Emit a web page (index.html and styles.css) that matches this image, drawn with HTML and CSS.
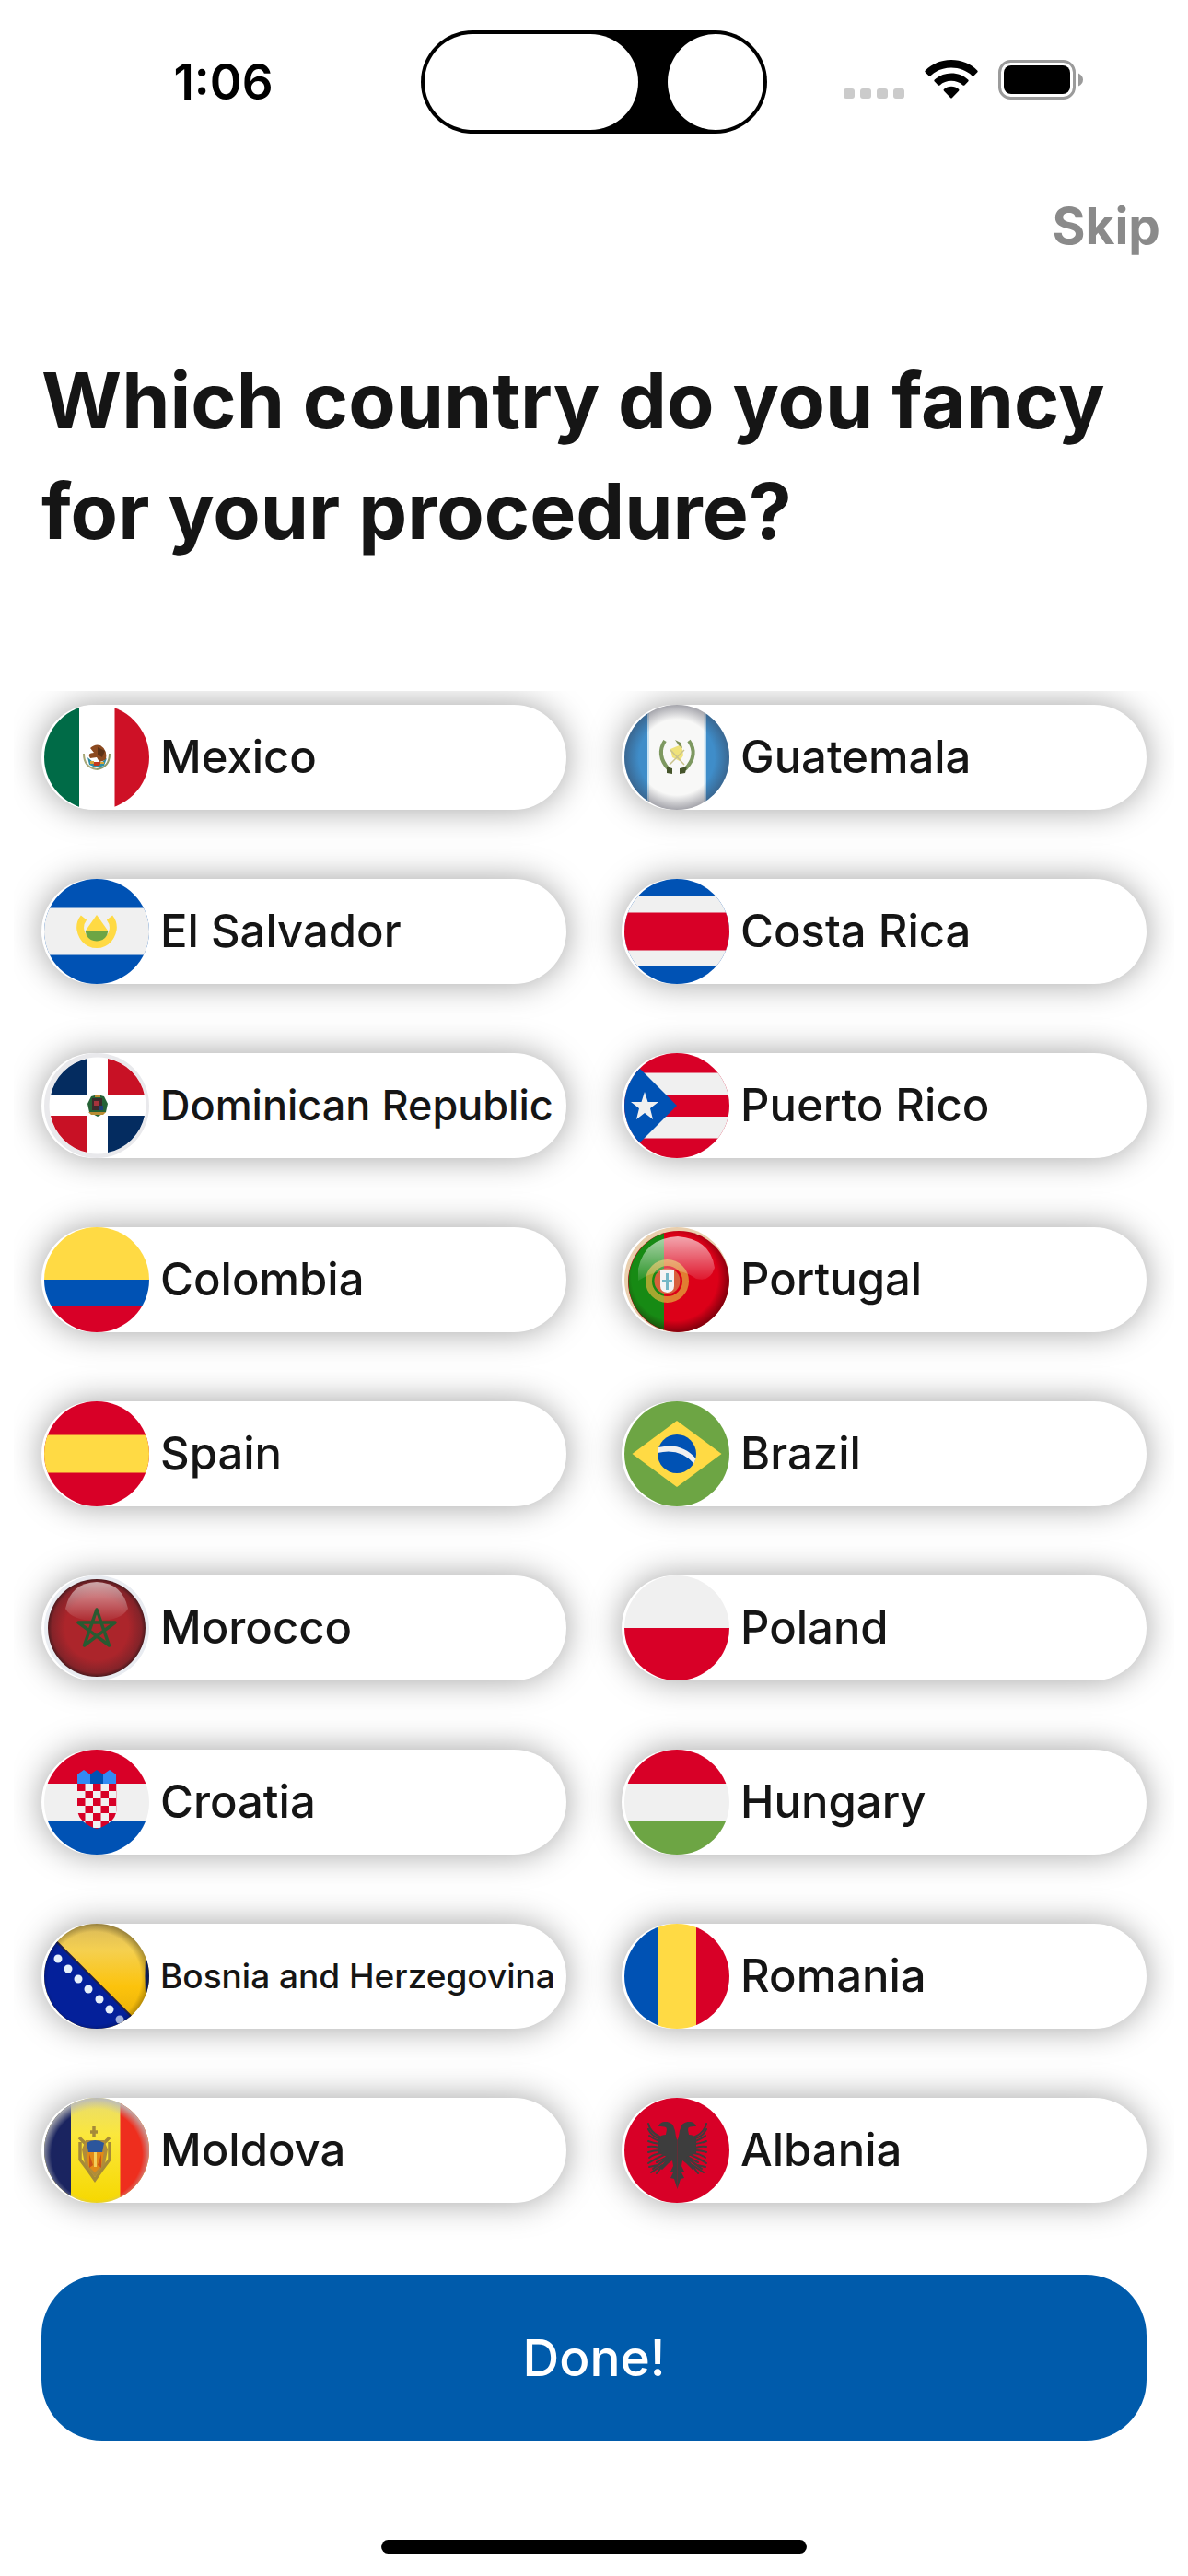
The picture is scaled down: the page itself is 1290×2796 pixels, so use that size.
FILE: index.html
```html
<!DOCTYPE html>
<html lang="en">
<head>
<meta charset="utf-8">
<meta name="viewport" content="width=device-width, initial-scale=1">
<title>Choose a country</title>
<link rel="stylesheet" href="styles.css">
</head>
<body class="screen">
<header class="status">
  <time class="status-time">1:06</time>
  <div class="island"><span class="island-pill"></span><span class="island-lens"></span></div>
  <div class="status-icons">
    <svg class="icon-signal" width="66" height="44" viewBox="0 0 66 44" aria-hidden="true"><g fill="#cbcbcb"><rect x="0" y="31" width="12" height="11" rx="3"/><rect x="18" y="31" width="12" height="11" rx="3"/><rect x="36" y="31" width="12" height="11" rx="3"/><rect x="54" y="31" width="12" height="11" rx="3"/></g></svg>
    <svg class="icon-wifi" width="58" height="44" viewBox="0 0 58 44" aria-hidden="true"><path d="M29 0C40 0 50 4 57.200 11.500Q58.200 12.500 57.200 13.500L53.500 17.200Q52.500 18 51.500 17.200C45.500 11.600 37.500 8.600 29 8.600S12.500 11.600 6.500 17.200Q5.500 18 4.500 17.200L.8 13.500Q-.2 12.500.8 11.500C8 4 18 0 29 0Z"/><path d="M29 14.500C36 14.500 42.500 17 47.200 21.600Q48.200 22.600 47.200 23.600L43.400 27.400Q42.500 28.200 41.500 27.400C38 24.400 33.700 22.800 29 22.800S20 24.400 16.500 27.400Q15.500 28.200 14.600 27.400L10.800 23.600Q9.800 22.600 10.800 21.600C15.500 17 22 14.500 29 14.500Z"/><path d="M29 28.800C32 28.800 34.800 29.900 37 31.700Q38 32.700 37 33.700L30 41Q29 42 28 41L21 33.700Q20 32.700 21 31.700C23.200 29.900 26 28.800 29 28.800Z"/></svg>
    <svg class="icon-battery" width="93" height="44" viewBox="0 0 93 44" aria-hidden="true"><rect x="1.500" y="1.500" width="81" height="40" rx="12" fill="none" stroke="#9b9b9b" stroke-width="3"/><rect x="6" y="6" width="72" height="31" rx="8"/><path d="M87 14.500Q92 17 92 21.500T87 28.500Z" fill="#9b9b9b"/></svg>
  </div>
</header>

<nav class="topbar"><button type="button" class="skip">Skip</button></nav>

<main class="content">
  <h1 class="title">Which country do you fancy for your procedure?</h1>

  <div class="countries">
    <button type="button" class="country">
      <svg class="flag" viewBox="0 0 114 114" aria-hidden="true"><path fill="#fff" d="M0 0h114v114H0z"/><path fill="#006b47" d="M0 0h38v114H0z"/><path fill="#ce1126" d="M76.500 0H114v114H76.500z"/><g fill="none" stroke-width="2"><path stroke="#a8a878" d="M43 53Q43 68 57 70"/><path stroke="#8e9a6a" d="M71 53Q71 68 57 70"/></g><path fill="#8c4a20" d="M50 47Q55 42 61 44 69 49 67 60L60 62 57 57 50 58Q46 52 54 52Z"/><path fill="#5d3216" d="M58 46L66 50 63 57 58 54Z"/><path fill="#2f8ea3" d="M47 57L53 62H63L68 58 65 66Q57 70 49 65Z"/><path fill="#c33a1e" d="M53 62h9l-2 4h-6z"/><path fill="#d5a63a" d="M50 61h4v3h-4zM61 62h4v2h-4z"/></svg>
      <span class="name">Mexico</span>
    </button>
    <button type="button" class="country">
      <svg class="flag" viewBox="0 0 114 114" aria-hidden="true"><defs><radialGradient id="gt-shade" cx=".5" cy=".5" r=".5"><stop offset=".72" stop-color="#334" stop-opacity="0"/><stop offset="1" stop-color="#334" stop-opacity=".42"/></radialGradient></defs><path fill="#f8f8f7" d="M0 0h114v114H0z"/><path fill="#3f8dc9" d="M0 0h25v114H0zM88.500 0H114v114H88.500z"/><path fill="#c9e4f4" d="M25 0h2v114h-2zM86.500 0h2v114h-2z"/><path fill="url(#gt-shade)" d="M0 0h114v114H0z"/><g fill="none" stroke="#7d9860" stroke-width="4"><path d="M44 39Q34 54 48 70"/><path d="M70 39Q81 54 66 70"/></g><path fill="#46552c" d="M46 67l6 2v6l-6-1zM60 69l8-2-2 7-6 1z"/><path fill="#efe27a" d="M50 48l12-5 2 12-4 6-8-4z"/><path fill="#7c8f58" d="M55 38l6 3 2 6-4-3z"/><path stroke="#c9c38c" stroke-width="1.500" d="M49 65l16-16M50 49l15 16"/></svg>
      <span class="name">Guatemala</span>
    </button>
    <button type="button" class="country">
      <svg class="flag" viewBox="0 0 114 114" aria-hidden="true"><path fill="#0052b4" d="M0 0h114v114H0z"/><path fill="#f0f0f0" d="M0 31.500h114v51H0z"/><path fill="none" stroke="#ffda44" stroke-width="8" d="M43 42C36 51 40 60 44 65 51 73 63 73 70 65 74 60 78 51 71 42"/><path fill="#ffda44" d="M57 39L69 56H45Z"/><path fill="#6da544" d="M44.500 56h25Q68 67 57 67.500 46 67 44.500 56Z"/></svg>
      <span class="name">El Salvador</span>
    </button>
    <button type="button" class="country">
      <svg class="flag" viewBox="0 0 114 114" aria-hidden="true"><path fill="#0052b4" d="M0 0h114v114H0z"/><path fill="#f0f0f0" d="M0 19h114v76H0z"/><path fill="#d80027" d="M0 36.500h114v41H0z"/></svg>
      <span class="name">Costa Rica</span>
    </button>
    <button type="button" class="country">
      <svg class="flag" viewBox="0 0 114 114" aria-hidden="true"><path fill="#e9e9ec" d="M0 0h114v114H0z"/><circle cx="58" cy="57" r="52.500" fill="#fff"/><path fill="#042c60" d="M47 6A52 52 0 0 0 7 46H47ZM69 108A52 52 0 0 0 109 68H69Z"/><path fill="#c81125" d="M69 6A52 52 0 0 1 109 46H69ZM47 108A52 52 0 0 1 7 68H47Z"/><path fill="#256236" d="M47 55L51 47 58 45 65 47 69 55 67 64 58 69 49 64Z"/><path fill="#3a2b2b" d="M52 49h11v13H52z"/><path fill="#b98c32" d="M55 45h6v3h-6zM48 64h19l-3 3H51z"/><path fill="#a5333c" d="M54 52h5v5h-5z"/><path fill="#1f3f78" d="M59 57h5v5h-5z"/></svg>
      <span class="name name-long">Dominican Republic</span>
    </button>
    <button type="button" class="country">
      <svg class="flag" viewBox="0 0 114 114" aria-hidden="true"><path fill="#d80027" d="M0 0h114v114H0z"/><path fill="#f0f0f0" d="M0 21.500h114v23.500H0zM0 69h114v23.500H0z"/><path fill="#0052b4" d="M0 0L57 57 0 114Z"/><path fill="#f0f0f0" d="M22 42L25.500 53H37L28 60 31 72 22 65 13 72 16 60 7 53H18.500Z"/></svg>
      <span class="name">Puerto Rico</span>
    </button>
    <button type="button" class="country">
      <svg class="flag" viewBox="0 0 114 114" aria-hidden="true"><path fill="#ffda44" d="M0 0h114v57H0z"/><path fill="#0052b4" d="M0 57h114v29H0z"/><path fill="#d80027" d="M0 86h114v28H0z"/></svg>
      <span class="name">Colombia</span>
    </button>
    <button type="button" class="country">
      <svg class="flag" viewBox="0 0 114 114" aria-hidden="true"><defs><radialGradient id="pt-shade" cx=".46" cy=".46" r=".56"><stop offset=".76" stop-color="#200" stop-opacity="0"/><stop offset="1" stop-color="#200" stop-opacity=".55"/></radialGradient><linearGradient id="pt-gloss" x2="0" y2="1"><stop stop-color="#fff" stop-opacity=".65"/><stop offset="1" stop-color="#fff" stop-opacity=".08"/></linearGradient></defs><path fill="#e9cfae" d="M0 0h114v114H0z"/><circle cx="59" cy="59" r="55" fill="#dc0018"/><path fill="#178a14" d="M43 6.500A55 55 0 0 0 43 111.500Z"/><circle cx="59" cy="59" r="55" fill="url(#pt-shade)"/><circle cx="46.500" cy="58.500" r="20" fill="none" stroke="#e3b43c" stroke-width="7" opacity=".7"/><circle cx="46.500" cy="58.500" r="14" fill="#d8603c"/><path fill="#f4f4f4" d="M39 47h15v17q0 6-7.500 7-7.500-1-7.500-7z"/><path fill="#74b7c6" d="M45 50h3v18h-3zM41 57h11v3H41z"/><path fill="url(#pt-gloss)" d="M15 45Q22 12 58 10 94 13 98 44 93 60 78 56 50 36 15 58Z"/></svg>
      <span class="name">Portugal</span>
    </button>
    <button type="button" class="country">
      <svg class="flag" viewBox="0 0 114 114" aria-hidden="true"><path fill="#d80027" d="M0 0h114v114H0z"/><path fill="#ffda44" d="M0 36.500h114v41H0z"/></svg>
      <span class="name">Spain</span>
    </button>
    <button type="button" class="country">
      <svg class="flag" viewBox="0 0 114 114" aria-hidden="true"><path fill="#6da544" d="M0 0h114v114H0z"/><path fill="#ffda44" d="M57 21L105.500 57 57 93 8.500 57Z"/><circle cx="57" cy="57" r="21" fill="#0052b4"/><path fill="#f0f0f0" d="M37 50Q62 44 77.500 62L75.500 67.500Q60 50 36 56Z"/></svg>
      <span class="name">Brazil</span>
    </button>
    <button type="button" class="country">
      <svg class="flag" viewBox="0 0 114 114" aria-hidden="true"><defs><radialGradient id="ma-shade" cx=".5" cy=".5" r=".5"><stop offset=".65" stop-color="#ac252b"/><stop offset=".92" stop-color="#832329"/><stop offset="1" stop-color="#4d1a1e"/></radialGradient><linearGradient id="ma-gloss" x2="0" y2="1"><stop stop-color="#fff" stop-opacity=".6"/><stop offset="1" stop-color="#fff" stop-opacity=".03"/></linearGradient></defs><path fill="#e9ecf1" d="M0 0h114v114H0z"/><circle cx="57" cy="57" r="53" fill="url(#ma-shade)"/><path fill="url(#ma-gloss)" d="M23 36Q29 8 57 7 85 8 91 36 84 49 57 49 30 49 23 36Z"/><path fill="none" stroke="#285a31" stroke-width="3.500" stroke-linejoin="round" d="M57 37L70.500 76 37 51H77L43.500 76Z"/></svg>
      <span class="name">Morocco</span>
    </button>
    <button type="button" class="country">
      <svg class="flag" viewBox="0 0 114 114" aria-hidden="true"><path fill="#f0f0f0" d="M0 0h114v57H0z"/><path fill="#d80027" d="M0 57h114v57H0z"/></svg>
      <span class="name">Poland</span>
    </button>
    <button type="button" class="country">
      <svg class="flag" viewBox="0 0 114 114" aria-hidden="true"><defs><pattern id="hr-check" x="36" y="37" width="17" height="16" patternUnits="userSpaceOnUse"><path fill="#f0f0f0" d="M0 0h17v16H0z"/><path fill="#d80027" d="M0 0h8.500v8H0zM8.500 8H17v8H8.500z"/></pattern></defs><path fill="#f0f0f0" d="M0 0h114v114H0z"/><path fill="#d80027" d="M0 0h114v37H0z"/><path fill="#0052b4" d="M0 77h114v37H0z"/><path fill="#338af3" d="M36 37V27l7-5 7 5 7-3 7 3 7-5 7 5v10Z"/><path fill="#0052b4" d="M50 37V27l7-5 7 5v10Z"/><path fill="url(#hr-check)" d="M36 37H78.500V66Q77 80 57 86 38 80 36 66Z"/></svg>
      <span class="name">Croatia</span>
    </button>
    <button type="button" class="country">
      <svg class="flag" viewBox="0 0 114 114" aria-hidden="true"><path fill="#f0f0f0" d="M0 0h114v114H0z"/><path fill="#d80027" d="M0 0h114v37H0z"/><path fill="#6da544" d="M0 78h114v36H0z"/></svg>
      <span class="name">Hungary</span>
    </button>
    <button type="button" class="country">
      <svg class="flag" viewBox="0 0 114 114" aria-hidden="true"><defs><linearGradient id="ba-gold" x2="0" y2="1"><stop stop-color="#d9b95a"/><stop offset=".25" stop-color="#f5d050"/><stop offset=".6" stop-color="#fcc30c"/><stop offset="1" stop-color="#e5ac08"/></linearGradient><radialGradient id="ba-shade" cx=".48" cy=".52" r=".54"><stop offset=".82" stop-opacity="0"/><stop offset="1" stop-opacity=".38"/></radialGradient></defs><path fill="url(#ba-gold)" d="M0 0h114v114H0z"/><path fill="#04209a" d="M0 6L108 114H0Z"/><path stroke="#20204a" stroke-width="2" d="M0 6L108 114"/><path fill="url(#ba-shade)" d="M0 0h114v114H0z"/><path fill="#0b1c55" d="M111 26Q108 57 111 88H114V26Z"/><g fill="#e6f0fb"><circle cx="15" cy="38" r="4.500"/><circle cx="26" cy="49" r="4.500"/><circle cx="37" cy="60" r="4.500"/><circle cx="48" cy="71" r="4.500"/><circle cx="60" cy="82" r="4.500"/><circle cx="71" cy="93" r="4.500"/><circle cx="82" cy="104" r="4.500" opacity=".7"/></g></svg>
      <span class="name name-longest">Bosnia and Herzegovina</span>
    </button>
    <button type="button" class="country">
      <svg class="flag" viewBox="0 0 114 114" aria-hidden="true"><path fill="#0052b4" d="M0 0h37v114H0z"/><path fill="#ffda44" d="M37 0h41v114H37z"/><path fill="#d80027" d="M78 0h36v114H78z"/></svg>
      <span class="name">Romania</span>
    </button>
    <button type="button" class="country">
      <svg class="flag" viewBox="0 0 114 114" aria-hidden="true"><defs><radialGradient id="md-shade" cx=".5" cy=".54" r=".54"><stop offset=".8" stop-color="#bbb" stop-opacity="0"/><stop offset="1" stop-color="#bbb"/></radialGradient><linearGradient id="md-gold" x2="0" y2="1"><stop stop-color="#e8dc70"/><stop offset=".35" stop-color="#fbe73c"/><stop offset="1" stop-color="#f6d800"/></linearGradient></defs><path fill="url(#md-gold)" d="M0 0h114v114H0z"/><path fill="#1a2460" d="M0 0h29v114H0z"/><path fill="#ee2e1e" d="M82.500 0H114v114H82.500z"/><path fill="url(#md-shade)" d="M0 0h114v114H0z"/><path fill="none" stroke="#a58a38" stroke-width="3.500" d="M54 31v12M50 37h8M38 43l9 9M71 43l-9 9M39 48v19l9 12 7 10 7-10 9-12V48"/><path fill="#b08c3a" d="M45 46h20l4 10-3 16-11 14-11-14-3-16Z"/><path fill="#2c569c" d="M46 49Q55 43 65 49L63 59H48Z"/><path fill="#e18a16" d="M46 59h19l-3 15-7 7-7-7Z"/><path fill="#c95318" d="M49 61l4 12-4 3zM62 61l-4 12 4 3z"/><path fill="#f3cf5a" d="M54 59h3v16h-3z"/></svg>
      <span class="name">Moldova</span>
    </button>
    <button type="button" class="country">
      <svg class="flag" viewBox="0 0 114 114" aria-hidden="true"><path fill="#d80027" d="M0 0h114v114H0z"/><g id="al-half" fill="#3d3d3d"><path d="M57.500 46C55 41 56 37 54 33 53 28 49 26 45 26 40 26 38 28 37 31 40 31 43 31 45 32 47 34 45 38 45 40 42 40 39 41 37 43V60L44 63 47 65 41 73 38 76 41 78 48 71 52 68 53 74 50 80 53 81 50 87 54 88 57.500 99Z"/><g fill="none" stroke="#3d3d3d" stroke-width="2" stroke-linecap="round"><path d="M26 28Q28 37 38 42M26 34Q30 42 38 44M27 41Q32 45 38 47M26 47Q31 49 38 50M26 53Q31 52 38 54M26 59Q32 57 39 57M27 65Q32 61 40 60M26 71Q33 66 43 62M35 70Q41 67 46 64M47 65L36 73 27 75M44 68L31 77M41 73L29 81M41 74L35 82"/></g></g><use href="#al-half" transform="matrix(-1 0 0 1 115 0)"/></svg>
      <span class="name">Albania</span>
    </button>
  </div>

  <button type="button" class="done">Done!</button>
</main>

<footer class="home"><span class="home-bar"></span></footer>
</body>
</html>
```

FILE: styles.css
```css
* {
  box-sizing: border-box;
}

.screen {
  margin: 0;
  min-height: 100vh;
  display: flex;
  flex-direction: column;
  background: #fff;
  color: #151515;
  font-family: Inter, "Liberation Sans", sans-serif;
}

button {
  border: 0;
  margin: 0;
  padding: 0;
  background: none;
  color: inherit;
  font: inherit;
  cursor: pointer;
}

/* Status bar */
.status {
  display: grid;
  grid-template-columns: 1fr 376px 1fr;
  align-items: center;
  height: 177px;
  color: #000;
}

.status-time {
  justify-self: center;
  padding-left: 28px;
  font-size: 53px;
  line-height: 64px;
  font-weight: 600;
}

.island {
  display: flex;
  justify-content: space-between;
  height: 112px;
  padding: 4px;
  border-radius: 56px;
  background: #000;
}

.island-pill {
  width: 232px;
  border-radius: 52px;
  background: #fff;
}

.island-lens {
  width: 104px;
  border-radius: 52px;
  background: #fff;
}

.status-icons {
  display: flex;
  gap: 22px;
  justify-self: center;
  padding: 0 30px 4px 0;
}

/* Top bar */
.topbar {
  display: flex;
  justify-content: flex-end;
  padding: 33px 30px 0;
}

.skip {
  color: #8a8a8a;
  font-size: 55px;
  line-height: 70px;
  font-weight: 700;
}

/* Country picker */
.content {
  display: flex;
  flex-direction: column;
  padding: 95px 45px 0;
}

.title {
  margin: 0 0 135px;
  font-size: 84px;
  line-height: 120px;
  font-weight: 700;
}

.countries {
  display: grid;
  grid-template-columns: 1fr 1fr;
  gap: 75px 60px;
  margin: 0 -30px;
  padding: 15px 30px 48px;
  overflow: hidden;
}

.country {
  display: flex;
  align-items: center;
  gap: 12px;
  height: 114px;
  padding-left: 3px;
  border-radius: 57px;
  background: #fff;
  box-shadow: 0 0 36px rgba(0, 0, 0, 0.37);
  text-align: left;
}

.flag {
  flex: none;
  width: 114px;
  height: 114px;
  border-radius: 50%;
}

.name {
  font-size: 49px;
  line-height: 60px;
  font-weight: 500;
  white-space: nowrap;
}

.name-long {
  font-size: 45px;
}

.name-longest {
  font-size: 37px;
}

.done {
  height: 180px;
  margin-top: 30px;
  border-radius: 66px;
  background: #005bab;
  color: #fff;
  font-size: 55px;
  font-weight: 500;
}

/* Home indicator */
.home {
  display: flex;
  justify-content: center;
  margin-top: auto;
  padding: 48px 0 24px;
}

.home-bar {
  width: 462px;
  max-width: 36%;
  height: 15px;
  border-radius: 8px;
  background: #000;
}
```
